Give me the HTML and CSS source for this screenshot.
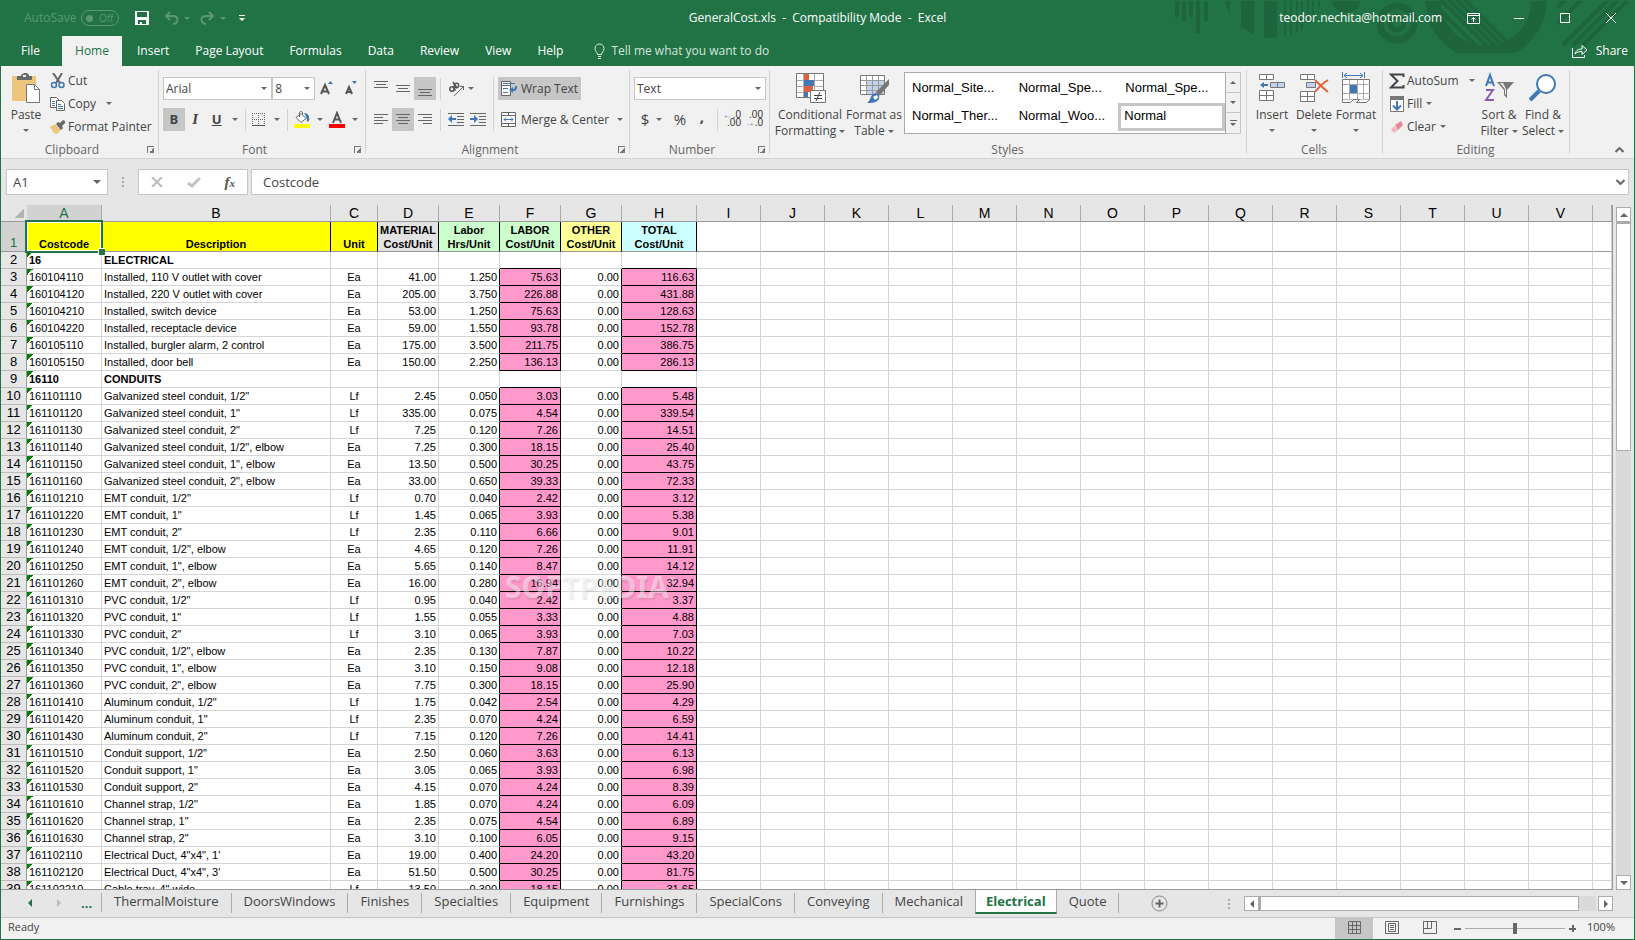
FILE: index.html
```html
<!DOCTYPE html>
<html lang="en">
<head>
    <meta charset="UTF-8">
    <meta name="viewport" content="width=device-width, initial-scale=1.0">
    <title>GeneralCost.xls - Excel</title>
    <link rel="stylesheet" href="styles.css">
</head>
<body>
    <header class="titlebar">
        <svg class="decor" width="495" height="66" viewBox="0 0 495 66" aria-hidden="true">
            <defs>
                <clipPath id="c1"><circle cx="134" cy="-12" r="50"/></clipPath>
                <clipPath id="c2"><rect x="280" y="1" width="140" height="52"/></clipPath>
                <clipPath id="c3"><circle cx="347" cy="1" r="47"/></clipPath>
                <clipPath id="c4"><path d="M418 1h72v52h-72z"/></clipPath>
            </defs>
            <g fill="#1e653d">
                <path d="M36 1h4v16h-4zM43 1h4v20h-4zM50 1h4v16h-4zM57 1h4v32h-4zM65 1h4v20h-4z"/>
                <path clip-path="url(#c1)" d="M84 1h7v60h-7zM102 1h13v60h-13zM125 1h13v60h-13zM145 1h2v60h-2zM151 1h2v60h-2zM157 1h2v60h-2zM162 1h2v60h-2zM168 1h2v60h-2zM173 1h2v60h-2zM179 1h2v60h-2zM183 1h2v60h-2z"/>
                <path d="M193 1h28c0 6-6 12-14 12s-14-6-14-12z"/>
            </g>
            <g fill="none" stroke="#1e653d">
                <circle cx="258" cy="23" r="17" stroke-width="7"/>
                <circle cx="258" cy="23" r="7" stroke-width="5"/>
                <circle clip-path="url(#c2)" cx="347" cy="0" r="53" stroke-width="15"/>
                <path clip-path="url(#c3)" stroke-width="4" d="M300-2l54 54M308-2l54 54M316-2l54 54M324-2l54 54M289-2l54 54"/>
                <path clip-path="url(#c4)" stroke-width="4" d="M418 8l9-9M418 24l25-25M424 45l46-46M434 45l46-46M444 45l46-46"/>
            </g>
        </svg>
        <div class="title-row">
            <div class="quick-access">
                <span class="autosave">AutoSave</span>
                <button class="toggle" aria-label="AutoSave off"><i></i>Off</button>
                <button class="qat save" aria-label="Save">
                    <svg width="14" height="14" viewBox="0 0 14 14"><path fill="#fff" fill-rule="evenodd" d="M0 0h14v14H0zM2 1v5h10V1zM3 9v4h2v-2h2v2h4V9z"/></svg>
                </button>
                <button class="qat undo" aria-label="Undo">
                    <svg width="15" height="14" viewBox="0 0 15 14"><path fill="none" stroke="#5b9776" stroke-width="2" d="M6 1L2 5l4 4M2 5h7c6 0 6 7 0 8"/></svg>
                </button>
                <i class="caret dim"></i>
                <button class="qat redo" aria-label="Redo">
                    <svg width="15" height="14" viewBox="0 0 15 14"><path fill="none" stroke="#5b9776" stroke-width="2" d="M9 1l4 4-4 4M13 5H6C0 5 0 12 6 13"/></svg>
                </button>
                <i class="caret dim"></i>
                <button class="qat more" aria-label="Customize Quick Access Toolbar">
                    <svg width="6" height="7" viewBox="0 0 6 7"><path fill="#fff" d="M0 0h6v1H0zM0 3h6L3 6z"/></svg>
                </button>
            </div>
            <div class="doc-title">GeneralCost.xls  -  Compatibility Mode  -  Excel</div>
            <div class="window-controls">
                <span class="account">teodor.nechita@hotmail.com</span>
                <button aria-label="Ribbon Display Options"><svg width="13" height="11" viewBox="0 0 13 11"><path fill="none" stroke="#fff" d="M.5.5h12v10H.5zM1 2.500h11M6.500 9V4.500M4.500 6.500l2-2 2 2"/></svg></button>
                <button aria-label="Minimize"><svg width="10" height="10" viewBox="0 0 10 10"><path fill="#fff" d="M0 5h10v1H0z"/></svg></button>
                <button aria-label="Maximize"><svg width="10" height="10" viewBox="0 0 10 10"><path fill="none" stroke="#fff" d="M.5.5h9v9h-9z"/></svg></button>
                <button aria-label="Close"><svg width="10" height="10" viewBox="0 0 10 10"><path stroke="#fff" d="M0 0l10 10M10 0L0 10"/></svg></button>
            </div>
        </div>
        <nav class="ribbon-tabs">
            <a class="file" href="#">File</a>
            <a class="active" href="#">Home</a>
            <a href="#">Insert</a>
            <a href="#">Page Layout</a>
            <a href="#">Formulas</a>
            <a href="#">Data</a>
            <a href="#">Review</a>
            <a href="#">View</a>
            <a href="#">Help</a>
            <a class="tell-me" href="#"><svg width="11" height="16" viewBox="0 0 11 16"><path fill="none" stroke="#e0ece5" d="M3.500 11.500c0-2-2.500-3-2.500-6a4.500 4.500 0 019 0c0 3-2.500 4-2.500 6zM4 13.500h3M4 15.500h3"/></svg>Tell me what you want to do</a>
            <a class="share" href="#"><svg width="16" height="14" viewBox="0 0 16 14"><path fill="none" stroke="#fff" d="M.5 4v9.500h12V11M3 10c1-4 4-5 7-5V1.500L15 6l-5 4.500V7.500C7 7.500 5 8 3 10z"/></svg>Share</a>
        </nav>
    </header>

    <section class="ribbon">
        <div class="group clipboard">
            <div class="group-body">
                <button class="big">
                    <svg width="30" height="32" viewBox="0 0 30 32"><path fill="#eec57c" d="M1 5h24v25H1z"/><path fill="#6a6a6a" d="M6 5h4V4l3-2h3l2 2v1h3v4H6z"/><path fill="#f1f1f1" d="M12 4h3v2h-3z"/><path fill="#fff" stroke="#777" d="M15.500 13.500h8l5 5v13h-13z"/><path fill="none" stroke="#777" d="M23.500 13.500v5h5"/></svg>
                    <span>Paste</span><i class="caret"></i>
                </button>
                <div class="stack">
                    <button class="line"><svg width="16" height="16" viewBox="0 0 16 16"><path stroke="#666" stroke-width="2" d="M3 0l7 10M12 0L6 10"/><g fill="none" stroke="#3f78b5" stroke-width="1.500"><circle cx="4" cy="12" r="2.500"/><circle cx="11.500" cy="12" r="2.500"/></g></svg>Cut</button>
                    <button class="line"><svg width="16" height="16" viewBox="0 0 16 16"><g fill="#fff" stroke="#666"><path d="M.5 1.500h6l3 3v7h-9z"/><path d="M6.500 4.500h5l3 3v7h-8z"/></g><path stroke="#3f78b5" d="M2 5.500h3M2 7.500h3M2 9.500h3M8 8.500h3M8 10.500h5M8 12.500h5"/></svg>Copy<i class="caret wide"></i></button>
                    <button class="line"><svg width="16" height="16" viewBox="0 0 16 16"><path fill="#eec57c" d="M0 8l5-3 6 6-4 4-3-1z"/><path fill="#666" d="M6 5l2-2 2 1 3-3 2 1v2l-3 3 1 2-2 2z"/></svg>Format Painter</button>
                </div>
            </div>
            <div class="group-name">Clipboard<button class="launcher" aria-label="Clipboard options"></button></div>
        </div>

        <div class="group font">
            <div class="group-body rows">
                <div class="row">
                    <label class="combo family"><select aria-label="Font"><option>Arial</option></select><i class="caret"></i></label>
                    <label class="combo size"><select aria-label="Font size"><option>8</option></select><i class="caret"></i></label>
                    <button class="tool grow" aria-label="Increase font size"><svg width="14" height="16" viewBox="0 0 14 16"><path fill="none" stroke="#555" stroke-width="2" d="M1 13L5 4l4 9M2.500 10.500h5"/><path fill="#3f78b5" d="M8 3h5l-2.500-3z"/></svg></button>
                    <button class="tool grow" aria-label="Decrease font size"><svg width="14" height="16" viewBox="0 0 14 16"><path fill="none" stroke="#555" stroke-width="2" d="M2 13l3-7 3 7M3 11h4"/><path fill="#3f78b5" d="M8 0h5l-2.500 3z"/></svg></button>
                </div>
                <div class="row">
                    <button class="tool on bold">B</button>
                    <button class="tool italic">I</button>
                    <button class="tool underline">U</button><i class="caret"></i>
                    <span class="sep"></span>
                    <button class="tool" aria-label="Borders"><svg width="14" height="14" viewBox="0 0 14 14"><path fill="none" stroke="#666" stroke-dasharray="1 1" d="M.5 0v13M6.500 0v13M12.500 0v13M0 .5h13M0 6.500h13"/><path fill="#555" d="M0 12h13v1H0z"/></svg></button><i class="caret"></i>
                    <span class="sep"></span>
                    <button class="tool" aria-label="Fill color"><svg width="16" height="17" viewBox="0 0 16 17"><path fill="#fff" stroke="#666" d="M2 6.500l5-4 5 5-5 4z"/><path fill="none" stroke="#666" d="M5.500 6V2c0-2 3-2 3 0v2"/><path fill="#3f78b5" d="M10 2c4 0 6 3 5 8l-2 1c0-4-1-6-3-9z"/><path fill="#ff0" d="M0 13h16v4H0z"/></svg></button><i class="caret"></i>
                    <button class="tool" aria-label="Font color"><svg width="16" height="17" viewBox="0 0 16 17"><path fill="none" stroke="#555" stroke-width="2" d="M4 12L8 2l4 10M5.500 8.500h5"/><path fill="red" d="M0 13h16v4H0z"/></svg></button><i class="caret"></i>
                </div>
            </div>
            <div class="group-name">Font<button class="launcher" aria-label="Font options"></button></div>
        </div>

        <div class="group alignment">
            <div class="group-body">
                <div class="rows">
                    <div class="row">
                        <button class="tool" aria-label="Top align"><svg width="14" height="16" viewBox="0 0 14 16"><path stroke="#666" d="M0 .5h14M2 3.500h10M0 6.500h14"/></svg></button>
                        <button class="tool" aria-label="Middle align"><svg width="14" height="16" viewBox="0 0 14 16"><path stroke="#666" d="M0 4.500h14M2 7.500h10M0 10.500h14"/></svg></button>
                        <button class="tool on" aria-label="Bottom align"><svg width="14" height="16" viewBox="0 0 14 16"><path stroke="#666" d="M0 8.500h14M2 11.500h10M0 14.500h14"/></svg></button>
                        <span class="sep"></span>
                        <button class="tool" aria-label="Orientation"><svg width="17" height="16" viewBox="0 0 17 16"><g fill="none" stroke="#555" stroke-width="1.500"><circle cx="4" cy="8" r="2.200"/><path d="M5 6l2.500 3.500M5 1l4 6"/><circle cx="8.500" cy="4.500" r="2.200"/></g><path fill="none" stroke="#666" d="M6 15l9.500-9.500M12 5.500h3.500V9"/></svg></button><i class="caret"></i>
                    </div>
                    <div class="row">
                        <button class="tool" aria-label="Align left"><svg width="14" height="12" viewBox="0 0 14 12"><path stroke="#666" d="M0 .5h14M0 3.500h9M0 6.500h14M0 9.500h9"/></svg></button>
                        <button class="tool on" aria-label="Center"><svg width="14" height="12" viewBox="0 0 14 12"><path stroke="#666" d="M0 .5h14M2 3.500h10M0 6.500h14M2 9.500h10"/></svg></button>
                        <button class="tool" aria-label="Align right"><svg width="14" height="12" viewBox="0 0 14 12"><path stroke="#666" d="M0 .5h14M5 3.500h9M0 6.500h14M5 9.500h9"/></svg></button>
                        <span class="sep"></span>
                        <button class="tool" aria-label="Decrease indent"><svg width="16" height="14" viewBox="0 0 16 14"><path stroke="#666" d="M0 .5h16M9 3.500h7M9 6.500h7M9 9.500h7M0 12.500h16"/><path fill="#3f78b5" d="M0 6l4-4v3h4v2H4v3z"/></svg></button>
                        <button class="tool" aria-label="Increase indent"><svg width="16" height="14" viewBox="0 0 16 14"><path stroke="#666" d="M0 .5h16M9 3.500h7M9 6.500h7M9 9.500h7M0 12.500h16"/><path fill="#3f78b5" d="M8 6L4 2v3H0v2h4v3z"/></svg></button>
                    </div>
                </div>
                <span class="sep tall"></span>
                <div class="rows wrap">
                    <button class="line on"><svg width="16" height="16" viewBox="0 0 16 16"><path fill="#fff" stroke="#666" d="M.5.5h9v4h-9zM.5 4.500h9v10h-9z"/><path stroke="#3f78b5" d="M2 2.500h12M2 7.500h5M2 11.500h5"/><path fill="#3f78b5" d="M8 9l4-3v2c2 0 2-1 2-3h2c0 4-1 5-4 5v2z"/></svg>Wrap Text</button>
                    <button class="line merge"><svg width="16" height="16" viewBox="0 0 16 16"><path fill="#fff" stroke="#666" d="M.5.5h14v14H.5zM0 3.500h15M0 11.500h15M7.500 0v3M7.500 12v3"/><path fill="none" stroke="#3f78b5" d="M3 7.500h9M5 5.500l-2 2 2 2M10 5.500l2 2-2 2"/></svg>Merge &amp; Center<i class="caret"></i></button>
                </div>
            </div>
            <div class="group-name">Alignment<button class="launcher" aria-label="Alignment options"></button></div>
        </div>

        <div class="group number">
            <div class="group-body rows">
                <label class="combo format"><select aria-label="Number format"><option>Text</option></select><i class="caret"></i></label>
                <div class="row">
                    <button class="tool symbol">$</button><i class="caret"></i>
                    <button class="tool symbol percent">%</button>
                    <button class="tool symbol comma">,</button>
                    <span class="sep"></span>
                    <button class="tool decimals" aria-label="Increase decimal"><span><b>←</b>.0</span><span>.00</span></button>
                    <button class="tool decimals" aria-label="Decrease decimal"><span>.00</span><span><b>→</b>.0</span></button>
                </div>
            </div>
            <div class="group-name">Number<button class="launcher" aria-label="Number options"></button></div>
        </div>

        <div class="group styles">
            <div class="group-body">
                <button class="big conditional">
                    <svg width="32" height="32" viewBox="0 0 32 32"><path fill="#fff" d="M2 3h27v24H2z"/><path fill="#e0603c" d="M10 3h5v6h-5zM10 15h9v6h-9z"/><path fill="#3f78b5" d="M10 9h11v6H10zM10 21h4v6h-4z"/><path fill="none" stroke="#aaa" d="M9.500 3v24M20.500 3v24M2 9.500h8M2 15.500h8M2 21.500h8M21 9.500h8M21 15.500h8"/><path fill="none" stroke="#777" d="M2.500 2.500h27v24h-27z"/><path fill="#fff" stroke="#777" d="M16.500 19.500h15v12h-15z"/><path stroke="#444" d="M20 24.500h8M20 27.500h8M22 30l4-9"/></svg>
                    <span>Conditional</span><span>Formatting<i class="caret"></i></span>
                </button>
                <button class="big table-format">
                    <svg width="32" height="32" viewBox="0 0 32 32"><path fill="#fff" d="M2 4h24v20H2z"/><path fill="#c0d3ea" d="M8 10h18v14H8z"/><path fill="none" stroke="#999" d="M8.500 4v20M14.500 4v20M20.500 4v20M2 9.500h24M2 14.500h24M2 19.500h24"/><path fill="none" stroke="#777" d="M2.500 4.500h24v19h-24z"/><path fill="#777" d="M31 8v6L21 25l-3-4z"/><path fill="#3f78b5" d="M17 22c3 0 5 3 4 6-2 4-8 4-12 4 4-2 3-9 8-10z"/><path fill="#fff" d="M15 26l4-2 1 3-3 2z"/></svg>
                    <span>Format as</span><span>Table<i class="caret"></i></span>
                </button>
                <div class="gallery">
                    <div class="gallery-items">
                        <button>Normal_Site...</button>
                        <button>Normal_Spe...</button>
                        <button>Normal_Spe...</button>
                        <button>Normal_Ther...</button>
                        <button>Normal_Woo...</button>
                        <button class="selected">Normal</button>
                    </div>
                    <div class="gallery-scroll">
                        <button aria-label="Previous row"><i class="caret up"></i></button>
                        <button aria-label="Next row"><i class="caret"></i></button>
                        <button class="expand" aria-label="More styles"><i class="caret"></i></button>
                    </div>
                </div>
            </div>
            <div class="group-name">Styles</div>
        </div>

        <div class="group cells">
            <div class="group-body">
                <button class="big">
                    <svg width="28" height="32" viewBox="0 0 28 32"><path fill="#fff" stroke="#777" d="M1.500 3.500h14v5h-14zM8.500 3.500v5M1.500 19.500h14v10h-14zM8.500 19.500v10M1.500 24.500h14"/><path fill="#c0d3ea" stroke="#777" d="M12.500 11.500h14v5h-14zM19.500 11.500v5"/><path fill="#3f78b5" d="M2 14l4-3v2h4v2H6v2z"/></svg>
                    <span>Insert</span><i class="caret"></i>
                </button>
                <button class="big">
                    <svg width="30" height="32" viewBox="0 0 30 32"><path fill="#fff" stroke="#777" d="M1.500 3.500h14v5h-14zM8.500 3.500v5M1.500 20.500h14v10h-14zM8.500 20.500v10M1.500 25.500h14"/><path fill="#c0d3ea" stroke="#777" d="M7.500 11.500h9v5h-9z"/><path fill="none" stroke="#e0603c" stroke-width="2" d="M16 9c4 4 8 8 13 12M29 9c-5 3-9 7-13 12"/></svg>
                    <span>Delete</span><i class="caret"></i>
                </button>
                <button class="big">
                    <svg width="28" height="32" viewBox="0 0 28 32"><path fill="none" stroke="#3f78b5" d="M.5 1v6M22.500 1v6M2 4.500h19M5 2L2 4.500 5 7M18 2l3 2.500L18 7"/><path fill="#fff" stroke="#777" d="M.5 8.500h27v20h-27z"/><path fill="none" stroke="#aaa" d="M7.500 9v20M15.500 9v20M21.500 9v20M1 13.500h27M1 22.500h27"/><path fill="#3f78b5" d="M8 14h7v8H8z"/><path fill="#fff" stroke="#777" d="M.5 28.500v3h8l3-3h6l-3 3h10l3-3"/></svg>
                    <span>Format</span><i class="caret"></i>
                </button>
            </div>
            <div class="group-name">Cells</div>
        </div>

        <div class="group editing">
            <div class="group-body">
                <div class="stack">
                    <button class="line"><svg width="16" height="16" viewBox="0 0 16 16"><path fill="none" stroke="#444" stroke-width="2" d="M14.500 4V1.500H2L8.500 8 2 14.500h12.500V12"/></svg>AutoSum<i class="caret wide"></i></button>
                    <button class="line"><svg width="16" height="16" viewBox="0 0 16 16"><path fill="#fff" stroke="#777" d="M1.500.5h13v15h-13z"/><path fill="#777" d="M1 0h14v4H1z"/><path fill="none" stroke="#3f78b5" stroke-width="2" d="M8 5v8M4 9.500l4 4 4-4"/></svg>Fill<i class="caret"></i></button>
                    <button class="line"><svg width="16" height="16" viewBox="0 0 16 16"><path fill="#e8869a" d="M6 6l6-4 2 4-5 5z"/><path fill="#f4b5c0" d="M5 7l4 4-4 3-3-3z"/></svg>Clear<i class="caret"></i></button>
                </div>
                <button class="big">
                    <svg width="30" height="32" viewBox="0 0 30 32"><path fill="none" stroke="#3f78b5" stroke-width="2" d="M2 15L6 4l4 11M3.500 11.500h5"/><path fill="none" stroke="#8e5bb5" stroke-width="2" d="M2 19h7L2 29h8"/><path fill="#777" d="M13 11h17l-7 8v8l-3-3v-5z"/><path fill="#f1f1f1" d="M16 12h3l3 6v6l-1-1v-5z"/></svg>
                    <span>Sort &amp;</span><span>Filter<i class="caret"></i></span>
                </button>
                <button class="big">
                    <svg width="28" height="32" viewBox="0 0 28 32"><circle cx="17" cy="13" r="9" fill="#fff" stroke="#3f78b5" stroke-width="2"/><path stroke="#3f78b5" stroke-width="4" d="M10 20l-9 9"/></svg>
                    <span>Find &amp;</span><span>Select<i class="caret"></i></span>
                </button>
            </div>
            <div class="group-name">Editing</div>
        </div>
        <button class="collapse" aria-label="Collapse the ribbon"><svg width="9" height="6" viewBox="0 0 9 6"><path fill="none" stroke="#666" stroke-width="2" d="M.5 5l4-4 4 4"/></svg></button>
    </section>

    <section class="formula-bar">
        <label class="name-box"><input type="text" value="A1" aria-label="Name box"><i class="caret big-caret"></i></label>
        <span class="dots"></span>
        <div class="formula-tools">
            <button aria-label="Cancel"><svg width="12" height="10" viewBox="0 0 12 10"><path stroke="#bbb" stroke-width="2" d="M1 0l10 10M11 0L1 10"/></svg></button>
            <button aria-label="Enter"><svg width="14" height="11" viewBox="0 0 14 11"><path fill="none" stroke="#c4c4c4" stroke-width="3" d="M1 6l4 3 8-8"/></svg></button>
            <button class="fx">f<small>x</small></button>
        </div>
        <label class="formula"><input type="text" value="Costcode" aria-label="Formula"><svg width="9" height="6" viewBox="0 0 9 6"><path fill="none" stroke="#666" stroke-width="2" d="M.5 1l4 4 4-4"/></svg></label>
    </section>

    <main class="workspace">
        <div class="sheet">
            <table class="grid">
                <colgroup id="cols"></colgroup>
                <thead><tr id="letters"></tr></thead>
                <tbody id="rows"></tbody>
            </table>
            <div class="watermark">SOFTPEDIA<sup>®</sup></div>
        </div>
        <div class="vscroll">
            <button aria-label="Scroll up"><i class="caret up big-caret"></i></button>
            <div class="track"><div class="thumb"></div></div>
            <button aria-label="Scroll down"><i class="caret big-caret"></i></button>
        </div>
    </main>

    <nav class="sheet-bar">
        <div class="sheet-nav">
            <button class="prev" aria-label="Previous sheet"></button>
            <button class="next" aria-label="Next sheet"></button>
            <button class="more">...</button>
        </div>
        <a href="#">ThermalMoisture</a>
        <a href="#">DoorsWindows</a>
        <a href="#">Finishes</a>
        <a href="#">Specialties</a>
        <a href="#">Equipment</a>
        <a href="#">Furnishings</a>
        <a href="#">SpecialCons</a>
        <a href="#">Conveying</a>
        <a class="before" href="#">Mechanical</a>
        <a class="active" href="#">Electrical</a>
        <a href="#">Quote</a>
        <button class="add" aria-label="New sheet"><svg width="17" height="17" viewBox="0 0 17 17"><circle cx="8.500" cy="8.500" r="7.500" fill="none" stroke="#888"/><path stroke="#666" stroke-width="2" d="M4.500 8.500h8M8.500 4.500v8"/></svg></button>
        <span class="dots"></span>
        <div class="hscroll">
            <button class="left" aria-label="Scroll left"></button>
            <div class="track"><div class="thumb"></div></div>
            <button class="right" aria-label="Scroll right"></button>
        </div>
    </nav>

    <footer class="status">
        <span class="ready">Ready</span>
        <button class="view on" aria-label="Normal view"><svg width="13" height="13" viewBox="0 0 13 13"><path fill="none" stroke="#666" d="M.5.5h12v12H.5zM4.500 0v13M8.500 0v13M0 4.500h13M0 8.500h13"/></svg></button>
        <button class="view" aria-label="Page layout view"><svg width="14" height="13" viewBox="0 0 14 13"><path fill="none" stroke="#666" d="M.5.5h13v12H.5zM3.500 2.500h7v8h-7zM5 4.500h4M5 6.500h4M5 8.500h4"/></svg></button>
        <button class="view" aria-label="Page break preview"><svg width="14" height="13" viewBox="0 0 14 13"><path fill="none" stroke="#666" d="M.5.500h13v12H.5zM.5 7.500h8V0M4.500 0v7"/></svg></button>
        <button class="zoom-step minus" aria-label="Zoom out"></button>
        <input class="zoom" type="range" min="0" max="100" value="50" aria-label="Zoom">
        <button class="zoom-step plus" aria-label="Zoom in"></button>
        <span class="zoom-value">100%</span>
    </footer>
    <script src="script.js"></script>
</body>
</html>
```
FILE: styles.css
```css
* {
    box-sizing: border-box;
}
body {
    display: flex;
    flex-direction: column;
    height: 100vh;
    margin: 0;
    border: 1px solid #217346;
    border-top: none;
    overflow: hidden;
    background: #e6e6e6;
    color: #444;
    font-family: "Open Sans", "Noto Sans", sans-serif;
    font-size: 12px;
    line-height: 16px;
}
button {
    padding: 0;
    border: none;
    background: none;
    color: inherit;
    font: inherit;
}
a {
    color: inherit;
    text-decoration: none;
}
svg {
    display: block;
    flex: none;
}
.caret {
    display: inline-block;
    flex: none;
    width: 6px;
    height: 3px;
    border: 3px solid transparent;
    border-top-color: #666;
    border-bottom: none;
}
.caret.up {
    border-top: none;
    border-bottom: 3px solid #666;
}
.caret.big-caret {
    width: 8px;
    height: 4px;
    border-width: 4px;
    border-bottom-width: 0;
}
.caret.up.big-caret {
    border-width: 0 4px 4px;
}
.caret.dim {
    border-top-color: #5b9776;
}

/* Title bar and ribbon tabs */
.titlebar {
    position: relative;
    flex: none;
    background: #217346;
    color: #fff;
}
.decor {
    position: absolute;
    top: 0;
    right: 0;
}
.title-row {
    position: relative;
    display: grid;
    grid-template-columns: 1fr auto 1fr;
    align-items: center;
    height: 36px;
}
.quick-access {
    display: flex;
    align-items: center;
    padding-left: 23px;
    color: #5b9776;
}
.toggle {
    display: flex;
    align-items: center;
    justify-content: space-between;
    width: 38px;
    height: 16px;
    margin-left: 5px;
    padding: 0 5px 0 4px;
    border: 1px solid #5b9776;
    border-radius: 8px;
    font-size: 10px;
}
.toggle i {
    width: 7px;
    height: 7px;
    border-radius: 50%;
    background: #5b9776;
}
.qat.save {
    margin: 0 15px 0 16px;
}
.qat.undo,
.qat.redo {
    margin-right: 5px;
}
.qat.redo {
    margin-left: 10px;
}
.qat.more {
    margin-left: 13px;
}
.doc-title {
    white-space: pre;
}
.window-controls {
    display: flex;
    justify-content: flex-end;
    align-items: center;
}
.window-controls button {
    display: flex;
    align-items: center;
    justify-content: center;
    width: 46px;
    height: 32px;
}
.account {
    margin-right: 8px;
}
.ribbon-tabs {
    position: relative;
    display: flex;
    height: 30px;
    line-height: 30px;
}
.ribbon-tabs a {
    padding: 0 13px;
}
.ribbon-tabs .file {
    width: 61px;
    padding: 0 20px;
}
.ribbon-tabs .active {
    width: 60px;
    margin-right: 2px;
    padding: 0;
    background: #f1f1f1;
    color: #217346;
    text-align: center;
}
.ribbon-tabs .tell-me,
.ribbon-tabs .share {
    display: flex;
    align-items: center;
    gap: 6px;
    color: #d5e5dc;
}
.ribbon-tabs .tell-me {
    padding-left: 18px;
}
.ribbon-tabs .share {
    gap: 8px;
    margin-left: auto;
    padding-right: 6px;
    color: #fff;
}

/* Ribbon */
.ribbon {
    display: flex;
    flex: none;
    height: 93px;
    border-bottom: 1px solid #d2d2d2;
    background: #f1f1f1;
}
.group {
    position: relative;
    flex: none;
    display: flex;
    flex-direction: column;
}
.group::after {
    content: "";
    position: absolute;
    top: 4px;
    right: 0;
    bottom: 4px;
    width: 1px;
    background: #d2d2d2;
}
.clipboard {
    width: 158px;
}
.font {
    width: 207px;
}
.alignment {
    width: 264px;
}
.number {
    width: 140px;
}
.styles {
    flex: 1;
}
.cells {
    width: 136px;
}
.editing {
    width: 187px;
}
.group-body {
    display: flex;
    height: 76px;
    padding: 0 4px;
}
.group-name {
    position: relative;
    padding-right: 16px;
    color: #666;
    line-height: 17px;
    text-align: center;
}
.styles .group-name,
.cells .group-name,
.editing .group-name {
    padding-right: 2px;
}
.launcher {
    position: absolute;
    top: 5px;
    right: 5px;
    width: 7px;
    height: 7px;
    border-top: 1px solid #777;
    border-left: 1px solid #777;
    background: linear-gradient(315deg, #777 50%, transparent 50%) 100% 100% / 5px 5px no-repeat;
}
.big {
    display: flex;
    flex-direction: column;
    align-items: center;
    min-width: 42px;
    padding-top: 5px;
    white-space: nowrap;
}
.big svg {
    margin-bottom: 4px;
}
.big > .caret {
    margin-top: 6px;
}
.big span .caret {
    margin-left: 3px;
    vertical-align: middle;
}
.clipboard .group-body {
    gap: 1px;
}
.stack {
    display: flex;
    flex-direction: column;
    align-items: flex-start;
    padding-top: 3px;
}
.line {
    display: flex;
    align-items: center;
    gap: 4px;
    height: 23px;
    padding: 0 3px;
    white-space: nowrap;
}
.line.on {
    padding-right: 3px;
}
.stack .line {
    padding: 0 2px;
    gap: 2px;
}
.line .caret {
    margin-left: 2px;
}
.line .caret.wide {
    margin-left: 8px;
}
.merge .caret {
    margin-left: 4px;
}
.rows {
    display: flex;
    flex-direction: column;
    gap: 8px;
    padding-top: 11px;
}
.row {
    display: flex;
    align-items: center;
    height: 23px;
}
.tool {
    display: flex;
    align-items: center;
    justify-content: center;
    width: 22px;
    height: 23px;
    font-size: 13px;
}
.on {
    background: #c6c6c6;
}
.bold {
    padding-bottom: 2px;
    font-weight: bold;
}
.italic {
    padding-bottom: 2px;
    font-family: "Liberation Serif", serif;
    font-size: 15px;
    font-style: italic;
    font-weight: bold;
}
.underline {
    padding-bottom: 2px;
    font-weight: bold;
    text-decoration: underline;
}
.font .row > .caret {
    margin: 0 4px;
}
.alignment .row > .caret {
    margin-left: 1px;
}
.sep {
    flex: none;
    width: 1px;
    height: 22px;
    margin: 0 4px;
    background: #d2d2d2;
}
.font .sep {
    margin: 0 3px;
}
.sep.tall {
    height: 54px;
    margin: 11px 4px 0 4px;
}
.rows.wrap {
    align-items: flex-start;
}
.alignment .group-body > .rows:first-child {
    flex: none;
    width: 119px;
}
.combo {
    position: relative;
    display: flex;
    align-items: center;
    height: 23px;
}
.combo select {
    appearance: none;
    width: 100%;
    height: 23px;
    padding: 0 2px;
    border: 1px solid #c6c6c6;
    border-radius: 0;
    background: #fff;
    color: #444;
    font: inherit;
}
.combo .caret {
    position: absolute;
    right: 5px;
}
.family {
    width: 111px;
}
.size {
    width: 43px;
}
.grow {
    margin-left: 2px;
}
.symbol {
    padding-bottom: 2px;
    font-size: 15px;
}
.percent {
    margin-left: 7px;
}
.comma {
    padding-bottom: 8px;
    font-weight: bold;
}
.decimals {
    flex-direction: column;
    align-items: flex-end;
    padding: 0 3px 2px 0;
    color: #333;
    font: 10px/8px "Liberation Sans", Arial, sans-serif;
}
.decimals b {
    color: #3f78b5;
}
.conditional {
    width: 72px;
}
.table-format {
    width: 56px;
}
.gallery {
    display: flex;
    flex: 1;
    height: 62px;
    margin: 6px 2px 0 2px;
}
.gallery-items {
    flex: 1;
    display: grid;
    grid-template-columns: repeat(3, 1fr);
    grid-template-rows: 28px 28px;
    align-content: center;
    border: 1px solid #ababab;
    background: #fff;
    color: #000;
    font: 13px "Liberation Sans", Arial, sans-serif;
}
.gallery-items button {
    padding: 0 0 3px 7px;
    text-align: left;
}
.gallery-items .selected {
    padding-left: 3px;
    border: 3px solid #c6c6c6;
}
.gallery-scroll {
    display: grid;
    grid-template-rows: 21px 20px 21px;
    width: 15px;
}
.gallery-scroll button {
    display: flex;
    align-items: center;
    justify-content: center;
    border: 1px solid #c6c6c6;
    border-left: none;
    border-top: none;
}
.gallery-scroll button:first-child {
    border-top: 1px solid #c6c6c6;
}
.gallery-scroll .expand {
    flex-direction: column;
    gap: 2px;
}
.expand::before {
    content: "";
    width: 7px;
    height: 1px;
    background: #666;
}
.editing .group-body {
    padding-right: 0;
}
.editing .stack {
    width: 90px;
}
.editing .big {
    min-width: 44px;
}
.collapse {
    align-self: flex-end;
    width: 64px;
    padding: 0 10px 5px 0;
}
.collapse svg {
    margin-left: auto;
}

/* Formula bar */
.formula-bar {
    flex: none;
    display: flex;
    height: 46px;
    padding: 10px 5px;
}
.name-box,
.formula,
.formula-tools {
    display: flex;
    align-items: center;
    height: 26px;
    border: 1px solid #c6c6c6;
    background: #fff;
}
.name-box {
    width: 102px;
    padding-right: 6px;
}
.formula-bar input {
    flex: 1;
    min-width: 0;
    padding: 0;
    border: none;
    background: none;
    color: #444;
    font: inherit;
    font-size: 13px;
}
.name-box input {
    padding-left: 6px;
}
.dots {
    width: 2px;
    height: 10px;
    background: repeating-linear-gradient(#aaa 0 2px, transparent 2px 4px);
}
.formula-bar .dots {
    margin: 8px 14px;
}
.formula-tools {
    width: 110px;
    justify-content: space-around;
}
.fx {
    color: #555;
    font: italic bold 15px/16px "Liberation Serif", serif;
}
.fx small {
    font-size: 11px;
}
.formula {
    flex: 1;
    margin-left: 3px;
    padding: 0 3px 0 11px;
}

/* Sheet */
.workspace {
    flex: 1;
    display: flex;
    min-height: 0;
}
.sheet {
    position: relative;
    flex: 1;
    overflow: hidden;
    border-right: 1px solid #999;
    border-bottom: 1px solid #999;
}
.grid {
    width: 100%;
    table-layout: fixed;
    border-spacing: 0;
    background: #fff;
    color: #000;
    font: 11px/15px "Liberation Sans", Arial, sans-serif;
}
.grid th,
.grid td {
    height: 17px;
    padding: 1px 2px 0 2px;
    border-right: 1px solid #d4d4d4;
    border-bottom: 1px solid #d4d4d4;
    white-space: nowrap;
    text-align: right;
    vertical-align: bottom;
}
.grid thead th {
    padding: 0;
    border-right-color: #ababab;
    border-bottom-color: #999;
    background: #e6e6e6;
    font-size: 14px;
    font-weight: normal;
    text-align: center;
    line-height: 16px;
}
.grid thead .corner {
    border-right-color: #e6e6e6;
    background: linear-gradient(135deg, transparent 50%, #b4b4b4 50%) 13px 3px / 10px 10px no-repeat #e6e6e6;
}
.grid tbody th {
    padding: 0;
    border-right-color: #999;
    border-bottom-color: #bbb;
    background: #e6e6e6;
    font-size: 13px;
    font-weight: normal;
    line-height: 16px;
    text-align: center;
}
.grid thead .current,
.grid tbody .current {
    background: #d2d2d2;
    color: #217346;
}
.grid .head td {
    position: relative;
    height: 30px;
    padding: 0;
    border-bottom-color: #999;
    font-weight: bold;
    line-height: 14px;
    text-align: center;
}
.grid .head th {
    border-bottom-color: #999;
}
.grid .head .ruled {
    border-right-color: #000;
}
.yellow {
    background: #ff0;
}
.gray {
    background: #e3e3e3;
}
.green {
    background: #cfc;
}
.cream {
    background: #ff9;
}
.cyan {
    background: #cff;
}
.selected-cell::before {
    content: "";
    position: absolute;
    z-index: 1;
    inset: -2px;
    border: 2px solid #217346;
    box-shadow: inset 0 0 0 1px #fff;
}
.selected-cell::after {
    content: "";
    position: absolute;
    z-index: 2;
    right: -4px;
    bottom: -4px;
    width: 6px;
    height: 6px;
    border: 1px solid #fff;
    border-right: none;
    border-bottom: none;
    background: #217346;
}
.grid .code {
    background: linear-gradient(135deg, #008000 50%, transparent 50%) 0 0 / 6px 6px no-repeat;
}
.grid .code,
.grid .name {
    text-align: left;
}
.grid .section .code,
.grid .section .name {
    font-weight: bold;
}
.grid .unit {
    text-align: center;
}
.grid .calc {
    border-color: #000;
    background: #f9c;
}
.grid .left-of-calc {
    border-right-color: #000;
}
.grid .above-calc {
    border-bottom-color: #000;
}
.watermark {
    position: absolute;
    top: 365px;
    left: 504px;
    color: rgba(255, 255, 255, 0.45);
    font: bold 30px/34px "Noto Sans", sans-serif;
    text-shadow: 1px 2px 2px rgba(0, 0, 0, 0.1);
}
.watermark sup {
    font-size: 9px;
    line-height: 9px;
    vertical-align: 14px;
}

/* Scrollbars */
.vscroll {
    flex: none;
    display: flex;
    flex-direction: column;
    width: 21px;
    padding: 2px 3px 0 3px;
}
.vscroll button,
.hscroll button {
    display: flex;
    flex: none;
    align-items: center;
    justify-content: center;
    width: 15px;
    height: 15px;
    border: 1px solid #ababab;
    background: #fff;
}
.track {
    flex: 1;
    background: #dadada;
}
.thumb {
    border: 1px solid #ababab;
    background: #fff;
}
.vscroll .thumb {
    height: 35%;
    border-top-width: 2px;
}

/* Sheet tabs */
.sheet-bar {
    flex: none;
    display: flex;
    height: 28px;
    border-bottom: 1px solid #c6c6c6;
    font-size: 13px;
    line-height: 26px;
}
.sheet-nav {
    display: flex;
    align-items: center;
    width: 101px;
    border-right: 1px solid #ababab;
    margin: 3px 0 5px 0;
    padding-left: 27px;
}
.prev,
.next,
.left,
.right {
    display: flex;
}
.prev::before,
.next::before,
.left::before,
.right::before {
    content: "";
    border: 4px solid transparent;
}
.prev::before {
    border-right-color: #217346;
    border-left: none;
}
.next::before {
    border-left-color: #bbb;
    border-right: none;
}
.left::before {
    border-right-color: #666;
    border-left: none;
}
.right::before {
    border-left-color: #666;
    border-right: none;
}
.next {
    margin: 0 20px 0 25px;
}
.sheet-nav .more {
    color: #217346;
    font-weight: bold;
}
.sheet-bar a {
    height: 20px;
    margin-top: 3px;
    padding: 0 12px;
    border-right: 1px solid #ababab;
    line-height: 17px;
}
.sheet-bar .active {
    height: 24px;
    margin-top: 0;
    padding: 0 10px;
    border-left: 1px solid #ababab;
    border-bottom: 2px solid #217346;
    background: #fff;
    color: #217346;
    font-weight: bold;
    line-height: 23px;
}
.sheet-bar .before {
    border-right: none;
}
.add {
    align-self: center;
    margin-left: 32px;
}
.sheet-bar .dots {
    margin: 9px 14px 0 auto;
}
.hscroll {
    display: flex;
    width: 369px;
    margin: 6px 21px 0 0;
}
.hscroll .track {
    height: 15px;
    margin-right: 2px;
}
.hscroll .thumb {
    width: 95%;
    height: 15px;
    border-left-width: 2px;
}

/* Status bar */
.status {
    flex: none;
    display: flex;
    align-items: center;
    height: 21px;
    padding: 0 19px 0 7px;
    background: #f1f1f1;
    font-size: 11px;
}
.ready,
.zoom-value {
    padding-bottom: 3px;
}
.ready {
    margin-right: auto;
}
.view {
    display: flex;
    align-items: center;
    justify-content: center;
    width: 38px;
    height: 21px;
    padding-bottom: 2px;
}
.zoom-step {
    width: 7px;
    height: 7px;
    background: linear-gradient(#666, #666) center / 7px 2px no-repeat;
}
.zoom-step.minus {
    margin-left: 5px;
}
.zoom-step.plus {
    background: linear-gradient(#666, #666) center / 7px 2px no-repeat, linear-gradient(#666, #666) center / 2px 7px no-repeat;
}
.zoom {
    appearance: none;
    width: 100px;
    height: 1px;
    margin: 0 4px;
    background: #ababab;
}
.zoom::-webkit-slider-thumb {
    appearance: none;
    width: 4px;
    height: 11px;
    background: #666;
}
.zoom-value {
    margin-left: 11px;
}
```
FILE: script.js
```js
const widths = [26, 75, 229, 47, 61, 61, 61, 61, 75, 64, 64, 64, 64, 64, 64, 64, 64, 64, 64, 64, 64, 64, 64];
const letters = 'ABCDEFGHIJKLMNOPQRSTUV';

const header = [
    ['Costcode', 'yellow selected-cell'],
    ['Description', 'yellow ruled'],
    ['Unit', 'yellow ruled'],
    ['MATERIAL<br>Cost/Unit', 'gray ruled'],
    ['Labor<br>Hrs/Unit', 'green ruled'],
    ['LABOR<br>Cost/Unit', 'green ruled'],
    ['OTHER<br>Cost/Unit', 'cream ruled'],
    ['TOTAL<br>Cost/Unit', 'cyan ruled']
];

// code | description | unit | material | hours | labor | total
const items = `16|ELECTRICAL
160104110|Installed, 110 V outlet with cover|Ea|41.00|1.250|75.63|116.63
160104120|Installed, 220 V outlet with cover|Ea|205.00|3.750|226.88|431.88
160104210|Installed, switch device|Ea|53.00|1.250|75.63|128.63
160104220|Installed, receptacle device|Ea|59.00|1.550|93.78|152.78
160105110|Installed, burgler alarm, 2 control|Ea|175.00|3.500|211.75|386.75
160105150|Installed, door bell|Ea|150.00|2.250|136.13|286.13
16110|CONDUITS
161101110|Galvanized steel conduit, 1/2"|Lf|2.45|0.050|3.03|5.48
161101120|Galvanized steel conduit, 1"|Lf|335.00|0.075|4.54|339.54
161101130|Galvanized steel conduit, 2"|Lf|7.25|0.120|7.26|14.51
161101140|Galvanized steel conduit, 1/2", elbow|Ea|7.25|0.300|18.15|25.40
161101150|Galvanized steel conduit, 1", elbow|Ea|13.50|0.500|30.25|43.75
161101160|Galvanized steel conduit, 2", elbow|Ea|33.00|0.650|39.33|72.33
161101210|EMT conduit, 1/2"|Lf|0.70|0.040|2.42|3.12
161101220|EMT conduit, 1"|Lf|1.45|0.065|3.93|5.38
161101230|EMT conduit, 2"|Lf|2.35|0.110|6.66|9.01
161101240|EMT conduit, 1/2", elbow|Ea|4.65|0.120|7.26|11.91
161101250|EMT conduit, 1", elbow|Ea|5.65|0.140|8.47|14.12
161101260|EMT conduit, 2", elbow|Ea|16.00|0.280|16.94|32.94
161101310|PVC conduit, 1/2"|Lf|0.95|0.040|2.42|3.37
161101320|PVC conduit, 1"|Lf|1.55|0.055|3.33|4.88
161101330|PVC conduit, 2"|Lf|3.10|0.065|3.93|7.03
161101340|PVC conduit, 1/2", elbow|Ea|2.35|0.130|7.87|10.22
161101350|PVC conduit, 1", elbow|Ea|3.10|0.150|9.08|12.18
161101360|PVC conduit, 2", elbow|Ea|7.75|0.300|18.15|25.90
161101410|Aluminum conduit, 1/2"|Lf|1.75|0.042|2.54|4.29
161101420|Aluminum conduit, 1"|Lf|2.35|0.070|4.24|6.59
161101430|Aluminum conduit, 2"|Lf|7.15|0.120|7.26|14.41
161101510|Conduit support, 1/2"|Ea|2.50|0.060|3.63|6.13
161101520|Conduit support, 1"|Ea|3.05|0.065|3.93|6.98
161101530|Conduit support, 2"|Ea|4.15|0.070|4.24|8.39
161101610|Channel strap, 1/2"|Ea|1.85|0.070|4.24|6.09
161101620|Channel strap, 1"|Ea|2.35|0.075|4.54|6.89
161101630|Channel strap, 2"|Ea|3.10|0.100|6.05|9.15
161102110|Electrical Duct, 4"x4", 1'|Ea|19.00|0.400|24.20|43.20
161102120|Electrical Duct, 4"x4", 3'|Ea|51.50|0.500|30.25|81.75
161102210|Cable tray, 4" wide|Lf|13.50|0.300|18.15|31.65`.split('\n').map(line => line.split('|'));

const cell = (text, cls) => `<td class="${cls}">${text}</td>`;
const empty = '<td></td>'.repeat(15);

document.getElementById('cols').innerHTML =
    widths.map(w => `<col style="width: ${w}px">`).join('') + '<col>';

document.getElementById('letters').innerHTML =
    '<th class="corner"></th>' +
    [...letters].map((l, i) => `<th class="${i === 0 ? 'current' : ''}">${l}</th>`).join('') +
    '<th></th>';

let html = '<tr class="head"><th class="current">1</th>' +
    header.map(([text, cls]) => cell(text, cls)).join('') + empty + '</tr>';

items.forEach(([code, name, unit, material, hours, labor, total], i) => {
    html += `<tr class="${unit ? '' : 'section'}"><th>${i + 2}</th>` + cell(code, 'code') + cell(name, 'name');
    if (unit) {
        html += cell(unit, 'unit') + cell(material, '') + cell(hours, 'left-of-calc') +
            cell(labor, 'calc') + cell('0.00', 'left-of-calc') + cell(total, 'calc');
    } else {
        html += cell('', '') + cell('', '') + cell('', '') +
            cell('', 'above-calc') + cell('', '') + cell('', 'above-calc');
    }
    html += empty + '</tr>';
});
document.getElementById('rows').innerHTML = html;
```
